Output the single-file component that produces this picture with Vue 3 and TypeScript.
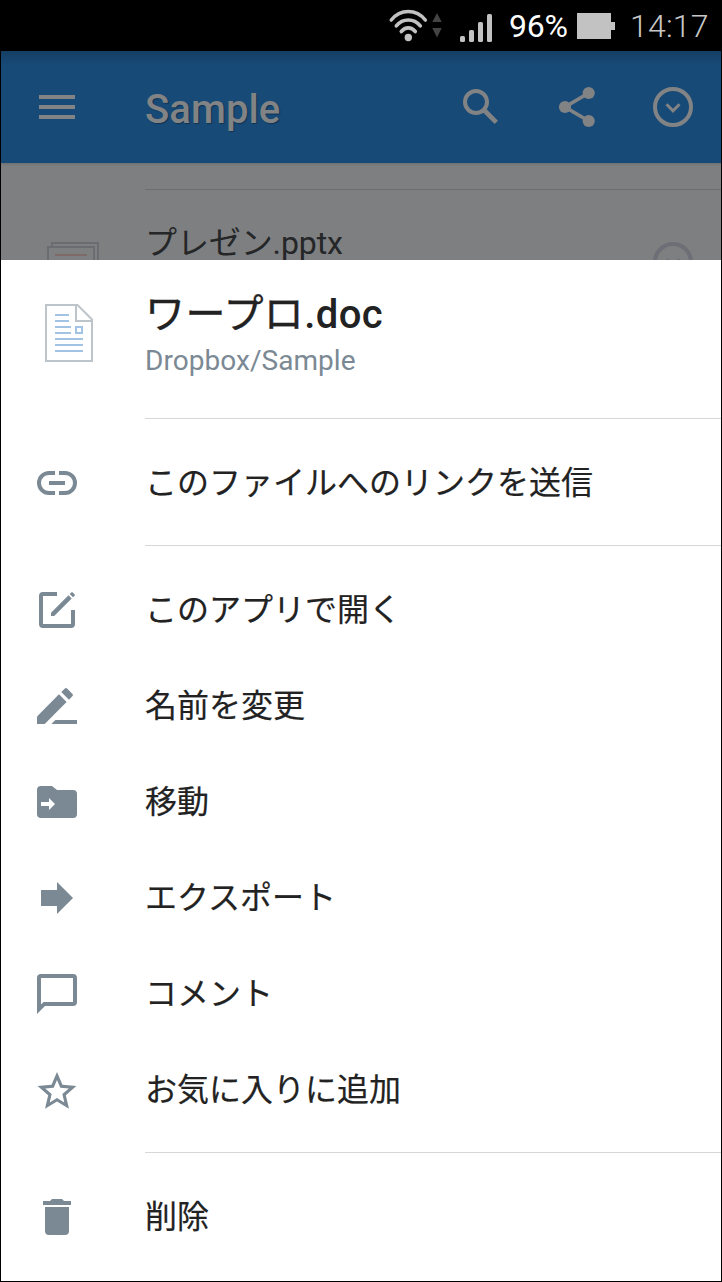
<script setup lang="ts">
type IconName = 'link' | 'open' | 'rename' | 'move' | 'export' | 'comment' | 'star' | 'trash'

interface Action {
  icon: IconName
  label: string
}

const groups: Action[][] = [
  [{ icon: 'link', label: 'このファイルへのリンクを送信' }],
  [
    { icon: 'open', label: 'このアプリで開く' },
    { icon: 'rename', label: '名前を変更' },
    { icon: 'move', label: '移動' },
    { icon: 'export', label: 'エクスポート' },
    { icon: 'comment', label: 'コメント' },
    { icon: 'star', label: 'お気に入りに追加' },
  ],
  [{ icon: 'trash', label: '削除' }],
]
</script>

<template>
  <div class="screen">
    <header class="status">
      <svg class="wifi" width="54" height="36" viewBox="0 0 54 36">
        <g fill="none" stroke="#c2c2c2" stroke-width="3.6" stroke-linecap="round">
          <path d="M3.300 12C12.300 .7 28.300 .7 37.300 12" />
          <path d="M8.300 17.900C14.800 10.100 25.800 10.100 32.300 17.900" />
          <path d="M13.300 23.500C17.300 18.700 23.300 18.700 27.300 23.500" />
        </g>
        <circle cx="20.300" cy="29.500" r="3.700" fill="#c2c2c2" />
        <path d="M49 5l4.700 9h-9.400zM49 29.500l4.700-9.500h-9.400z" fill="#444" />
      </svg>
      <svg class="signal" width="34" height="30" viewBox="0 0 34 30">
        <g fill="#c2c2c2">
          <rect x="0" y="22" width="5" height="6" rx="1.500" />
          <rect x="9" y="16" width="5" height="12" rx="1.500" />
          <rect x="18" y="8" width="5" height="20" rx="1.500" />
          <rect x="27" y="0" width="5" height="28" rx="1.500" />
        </g>
      </svg>
      <span class="percent">96%</span>
      <svg class="battery" width="38" height="26" viewBox="0 0 38 26">
        <path d="M0 0h34v9h4v8h-4v9H0z" fill="#c2c2c2" />
      </svg>
      <span class="clock">14:17</span>
    </header>

    <nav class="appbar">
      <svg class="menu" width="36" height="24" viewBox="0 0 36 24">
        <path d="M0 0h36v4H0zM0 10h36v4H0zM0 20h36v4H0z" fill="#828384" />
      </svg>
      <h1>Sample</h1>
      <svg width="48" height="48" viewBox="0 0 48 48" fill="none" stroke="#828384">
        <circle cx="19" cy="19" r="11" stroke-width="4" />
        <path d="M27.500 27.500L39.300 39.300" stroke-width="4.600" />
      </svg>
      <svg width="48" height="48" viewBox="0 0 48 48" fill="#828384">
        <path d="M35.700 10L12 24l23.700 14" fill="none" stroke="#828384" stroke-width="3.700" />
        <circle cx="35.700" cy="10" r="6.100" />
        <circle cx="12" cy="24" r="6.100" />
        <circle cx="35.700" cy="38" r="6.100" />
      </svg>
      <svg width="48" height="48" viewBox="0 0 48 48" fill="none" stroke="#828384">
        <circle cx="24" cy="24" r="18" stroke-width="4" />
        <path d="M17.500 21.300L24 27.800l6.500-6.500" stroke-width="3" />
      </svg>
    </nav>

    <section class="list">
      <div class="list-row">
        <svg class="slides" width="54" height="60" viewBox="0 0 54 60" fill="none" stroke-width="2">
          <path d="M5 5V1h46v50h-4M1 5h46v50H1z" stroke="#696d72" />
          <path d="M8 13h32" stroke="#7e6a66" />
        </svg>
        <span class="list-name">プレゼン.pptx</span>
        <svg class="more" width="40" height="40" viewBox="0 0 40 40" fill="none" stroke="#6c6f75">
          <circle cx="20" cy="20" r="18" stroke-width="4" />
          <path d="M13.500 17.300L20 23.800l6.500-6.500" stroke-width="3" />
        </svg>
      </div>
    </section>

    <main class="sheet">
      <div class="file">
        <svg class="doc" width="48" height="58" viewBox="0 0 48 58" fill="none" stroke-width="2">
          <path d="M1 1h31.500L47 15.500V57H1zM31 1v16h16" stroke="#bdc4ca" />
          <path
            d="M10 11h14M10 17h14M10 23h16M10 29h16M10 35h28M10 41h28M10 47h28"
            stroke="#a3c3e5"
          />
          <rect x="31" y="23" width="6" height="6" stroke="#a3c3e5" />
        </svg>
        <div class="file-text">
          <h2><span class="kana">ワープロ</span>.doc</h2>
          <p>Dropbox/Sample</p>
        </div>
      </div>

      <ul v-for="(group, g) in groups" :key="g" class="group">
        <li v-for="action in group" :key="action.label">
          <svg class="icon" width="48" height="48" viewBox="0 0 48 48" fill="#7b8994">
            <g v-if="action.icon === 'link'" fill="none" stroke="#7b8994" stroke-width="4">
              <path d="M22 15h-6a10 10 0 0 0 0 20h6M26 15h6a10 10 0 0 1 0 20h-6M16 25h16" />
            </g>
            <g v-else-if="action.icon === 'open'">
              <path
                d="M24 8H10a2 2 0 0 0-2 2v28a2 2 0 0 0 2 2h28a2 2 0 0 0 2-2V24"
                fill="none"
                stroke="#7b8994"
                stroke-width="4"
              />
              <path d="M18 30v-3.200L35.500 9.300l3.200 3.200L21.200 30zM36.700 8l1.600-1.600q.7-.7 1.400 0l1.900 1.900q.7.700 0 1.400L40 11.300z" />
            </g>
            <g v-else-if="action.icon === 'rename'">
              <path d="M4 42v-7.600L26 12.300l7.600 7.600L11.700 42z" />
              <path d="M28.300 10l3.600-3.500q1.100-1 2.200 0l5.400 5.400q1 1.100 0 2.200L36 17.700z" />
              <path d="M22.400 38H44v4H18.400z" />
            </g>
            <path
              v-else-if="action.icon === 'move'"
              fill-rule="evenodd"
              d="M8 8h11l5 4h16a4 4 0 0 1 4 4v20a4 4 0 0 1-4 4H8a4 4 0 0 1-4-4V12a4 4 0 0 1 4-4zM8 24v4h8v4l6-6-6-6v4z"
            />
            <path v-else-if="action.icon === 'export'" d="M8 16h16V8l16 16-16 16v-8H8z" />
            <path
              v-else-if="action.icon === 'comment'"
              fill-rule="evenodd"
              d="M8 4h32a4 4 0 0 1 4 4v24a4 4 0 0 1-4 4H12l-8 8V8a4 4 0 0 1 4-4zM8 8v26.500L10.500 32H40V8z"
            />
            <path
              v-else-if="action.icon === 'star'"
              transform="translate(.72 2.120) scale(1.940)"
              d="M22 9.240l-7.190-.62L12 2 9.190 8.630 2 9.240l5.460 4.730L5.820 21 12 17.270 18.180 21l-1.630-7.030L22 9.240zM12 15.400l-3.760 2.270 1-4.280-3.320-2.880 4.380-.38L12 6.100l1.710 4.040 4.380.38-3.320 2.880 1 4.280L12 15.400z"
            />
            <path
              v-else
              d="M10 8h7l2-2h10l2 2h7v4H10zM12 14h24v24a4 4 0 0 1-4 4H16a4 4 0 0 1-4-4z"
            />
          </svg>
          <span class="label">{{ action.label }}</span>
        </li>
      </ul>
    </main>
  </div>
</template>

<style>
body {
  margin: 0;
  background: #000;
}
</style>

<style scoped>
.screen {
  box-sizing: border-box;
  width: 722px;
  height: 1282px;
  padding: 0 1px 1px;
  display: flex;
  flex-direction: column;
  overflow: hidden;
  background: #000;
  font-family: Roboto, "Noto Sans CJK JP", sans-serif;
}
svg {
  display: block;
  flex: none;
}
h1,
h2,
p,
ul {
  margin: 0;
  padding: 0;
}
.status {
  height: 51px;
  flex: none;
  display: flex;
  align-items: flex-start;
  justify-content: flex-end;
  padding-right: 11px;
}
.wifi {
  margin: 8px 18px 0 0;
}
.signal {
  margin: 14px 15px 0 0;
}
.percent {
  margin-top: 7px;
  width: 61px;
  font-size: 32px;
  line-height: 38px;
  letter-spacing: -0.2px;
  color: #fff;
}
.battery {
  margin: 13px 15px 0 7px;
}
.clock {
  margin-top: 7px;
  width: 80px;
  font-size: 32px;
  line-height: 38px;
  font-weight: 300;
  letter-spacing: 0.2px;
  color: #c8c8c8;
}
.appbar {
  height: 112px;
  flex: none;
  display: flex;
  align-items: center;
  gap: 48px;
  box-sizing: border-box;
  padding: 0 24px 0 38px;
  background: linear-gradient(#153f64, #174a77 14px);
}
.menu {
  margin-right: 22px;
}
.appbar h1 {
  flex: 1;
  padding-top: 6px;
  font-size: 40px;
  line-height: 48px;
  font-weight: 500;
  letter-spacing: 0.1px;
  color: #828384;
  text-shadow: 1px 1px 1px rgba(0, 0, 0, 0.3);
}
.list {
  height: 97px;
  flex: none;
  overflow: hidden;
  box-sizing: border-box;
  padding-top: 26px;
  background: linear-gradient(#6d7073, #7e7f81 3px);
}
.list-row {
  display: flex;
  align-items: flex-start;
  padding: 53px 28px 0 46px;
  background: linear-gradient(#6b6e71, #6b6e71) 144px 0 / 576px 1px no-repeat;
}
.slides {
  margin-right: 44px;
}
.list-name {
  flex: 1;
  margin-top: -19px;
  font-size: 32px;
  line-height: 40px;
  letter-spacing: -0.1px;
  color: #242627;
}
.sheet {
  flex: 1;
  background: #fff;
}
.file {
  height: 158px;
  display: flex;
  align-items: flex-start;
  padding-left: 44px;
}
.doc {
  margin: 44px 52px 0 0;
}
.file-text {
  padding-top: 31px;
}
.file h2 {
  font-size: 40px;
  line-height: 48px;
  font-weight: 500;
  letter-spacing: 0.4px;
  color: #222;
}
.kana {
  font-weight: 400;
  -webkit-text-stroke: 0.4px #222;
}
.file p {
  margin-top: 5px;
  font-size: 28px;
  line-height: 34px;
  letter-spacing: 0.05px;
  color: #7b8994;
}
.group {
  list-style: none;
  padding: 17px 0 14px;
  background: linear-gradient(#d5d8da, #d5d8da) 144px 0 / 576px 1px no-repeat;
}
.group:first-of-type {
  padding: 16px 0 15px;
}
.group li {
  height: 96px;
  display: flex;
  align-items: center;
  padding-left: 32px;
  font-size: 32px;
  line-height: 48px;
  color: #222;
}
.label {
  -webkit-text-stroke: 0.2px #222;
}
.group:first-of-type .label {
  padding-top: 2px;
}
.icon {
  margin-right: 64px;
}
</style>
